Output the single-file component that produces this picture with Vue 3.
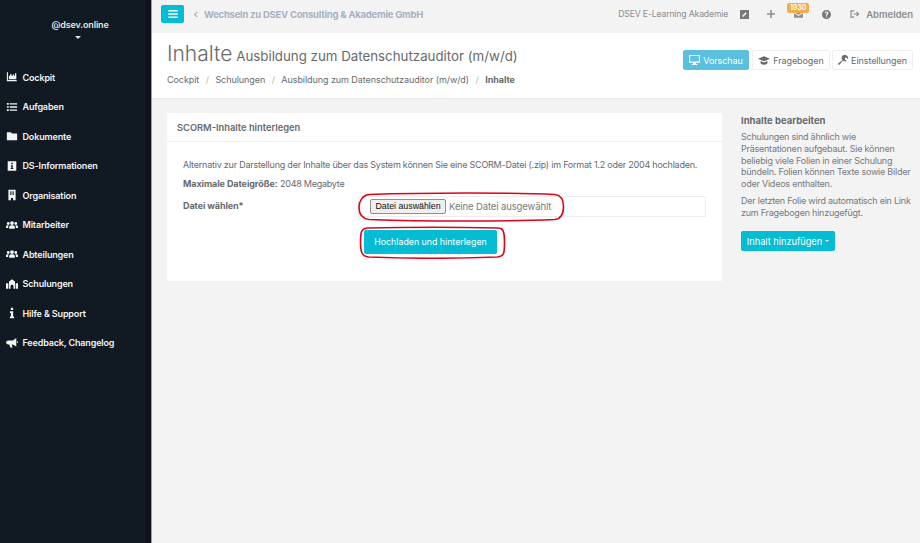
<script setup>
const users = 'M7 2.500a2.200 2.200 0 1 1 0 4.400 2.200 2.200 0 0 1 0-4.400zM2.600 3.500a1.700 1.700 0 1 1 0 3.400 1.700 1.700 0 0 1 0-3.400zM11.400 3.500a1.700 1.700 0 1 1 0 3.400 1.700 1.700 0 0 1 0-3.400zM3.700 11.500V9.300C3.700 8 5 7.400 7 7.400s3.300.6 3.300 1.900v2.200zM0 10.500V8.700c0-1 1-1.300 3.200-1.300-.5.500-.7 1.200-.7 3.100zM14 10.500V8.700c0-1-1-1.300-3.200-1.300.5.500.7 1.200.7 3.100z'
const nav = [
  { label: 'Cockpit', d: 'M1 1.500h1.300v9h10.200V12H1zM3.300 9.500V5.500H5v-2h1.500v2H8V4h1.500v1.500h1V2.500H12v7z' },
  { label: 'Aufgaben', d: 'M1 2.300h2.200v2H1zM1 6h2.200v2H1zM1 9.700h2.200v2H1zM4.300 2.500h8.700v1.600H4.300zM4.300 6.200h8.700v1.600H4.300zM4.300 9.900h8.700v1.600H4.300z' },
  { label: 'Dokumente', d: 'M1 2.500h4.500L7 4h6v8H1z' },
  { label: 'DS-Informationen', d: 'M2 1.500h10v11H2zM6.100 3.300v1.700h1.800V3.300zM5.600 6v1.200h.6v2.200h-.7v1.200h3V9.400h-.7V6z', rule: 'evenodd' },
  { label: 'Organisation', d: 'M2.800 .8h8.400v12.400H8.300v-2.700H5.700v2.700H2.800zM5 2.500v4.500h1.300V2.500zM7.700 2.500v4.500H9V2.500z', rule: 'evenodd' },
  { label: 'Mitarbeiter', d: users },
  { label: 'Abteilungen', d: users },
  { label: 'Schulungen', d: 'M7 1.500l3.500 2.500v8.500H8.700V9.500a1.700 1.700 0 0 0-3.400 0v3H3.500V4zM0 6h2.700v6.500H0zM11.300 6H14v6.500h-2.700z' },
  { label: 'Hilfe & Support', d: 'M5.700 1h2.600v2.500H5.700zM4.600 5h3.700v6h1.100v2H4.600v-2h1.100V7H4.600z' },
  { label: 'Feedback, Changelog', d: 'M12 1.200v10L8 8.700H6.700l1 3.600H4.900L3.900 8.700H2.500a2.200 2.200 0 0 1 0-4.700H8zM13 5h1v2h-1z' },
]
const crumbs = ['Cockpit', 'Schulungen', 'Ausbildung zum Datenschutzauditor (m/w/d)']
</script>

<template>
  <div class="app">
    <aside class="sidebar">
      <div class="profile">
        <span>@dsev.online</span>
        <i class="caret"></i>
      </div>
      <nav class="nav">
        <a v-for="item in nav" :key="item.label" class="nav-item">
          <svg viewBox="0 0 14 14" width="12" height="12" class="nav-icon">
            <path :d="item.d" :fill-rule="item.rule || 'nonzero'" fill="currentColor" />
          </svg>
          {{ item.label }}
        </a>
      </nav>
    </aside>

    <main class="main">
      <header class="topbar">
        <button class="menu-btn" aria-label="Menü">
          <svg viewBox="0 0 12 10" width="10" height="8"><path d="M0 0h12v2H0zM0 4h12v2H0zM0 8h12v2H0z" fill="#fff" /></svg>
        </button>
        <a class="switch">
          <svg viewBox="0 0 6 10" width="4" height="7"><path d="M5 1L1 5l4 4" fill="none" stroke="currentColor" stroke-width="1.800" /></svg>
          Wechseln zu DSEV Consulting &amp; Akademie GmbH
        </a>
        <div class="top-right">
          <span class="org">DSEV E-Learning Akademie</span>
          <svg class="ti" viewBox="0 0 12 12" width="9" height="9"><path d="M0 0h12v12H0zM7.500 3L3 7.500V9h1.500L9 4.500z" fill="currentColor" fill-rule="evenodd" /></svg>
          <svg class="ti plus" viewBox="0 0 10 10" width="8" height="8"><path d="M4 0h2v4h4v2H6v4H4V6H0V4h4z" fill="currentColor" /></svg>
          <span class="mail">
            <svg viewBox="0 0 12 10" width="9" height="8"><path d="M0 1h12v1.500L6 6 0 2.500zM0 4l6 3.500L12 4v6H0z" fill="currentColor" /></svg>
            <b class="badge">1930</b>
          </span>
          <svg class="ti help" viewBox="0 0 12 12" width="9" height="9"><path d="M6 0a6 6 0 1 1 0 12A6 6 0 0 1 6 0zM5.200 8.500v1.500h1.600V8.500zM6 2C4.500 2 3.600 2.800 3.500 4l1.500.2c.1-.6.400-.9 1-.9s.9.300.9.700c0 .9-1.700 1-1.700 2.900V7.500h1.600c0-1.400 1.800-1.400 1.800-3.400C8.600 2.800 7.500 2 6 2z" fill="currentColor" fill-rule="evenodd" /></svg>
          <a class="logout">
            <svg viewBox="0 0 12 10" width="10" height="8"><path d="M5 1H1v8h4M4 5h6M8 2.500L10.500 5 8 7.500" fill="none" stroke="currentColor" stroke-width="1.500" /></svg>
            Abmelden
          </a>
        </div>
      </header>

      <section class="page-head">
        <div class="titles">
          <h1>Inhalte <small>Ausbildung zum Datenschutzauditor (m/w/d)</small></h1>
          <ol class="crumbs">
            <li v-for="c in crumbs" :key="c">{{ c }}<span class="sep">/</span></li>
            <li><strong>Inhalte</strong></li>
          </ol>
        </div>
        <div class="actions">
          <button class="act primary">
            <svg viewBox="0 0 12 11" width="11" height="10"><path d="M0 0h12v8.500H7.500V10H9v1H3v-1h1.500V8.500H0zM1.200 1.200v6h9.600v-6z" fill="currentColor" fill-rule="evenodd" /></svg>
            Vorschau
          </button>
          <button class="act second">
            <svg viewBox="0 0 14 10" width="12" height="9"><path d="M7 0l7 3-7 3-7-3zM3 5.500l4 1.800 4-1.800V8c0 1-2 2-4 2S3 9 3 8z" fill="currentColor" /></svg>
            Fragebogen
          </button>
          <button class="act third">
            <svg viewBox="0 0 12 12" width="10" height="10"><path d="M8.500 0a3.500 3.500 0 0 1 3.300 4.800L9.800 2.900 8 3.500 8.500 5.300l1.900 1.600A3.500 3.500 0 0 1 6 6.500L2 11.500a1 1 0 0 1-1.500-1.500L5.500 6A3.500 3.500 0 0 1 8.500 0z" fill="currentColor" /></svg>
            Einstellungen
          </button>
        </div>
      </section>

      <div class="content">
        <section class="card">
          <h2 class="card-title">SCORM-Inhalte hinterlegen</h2>
          <div class="card-body">
            <p class="intro">Alternativ zur Darstellung der Inhalte über das System können Sie eine SCORM-Datei (.zip) im Format 1.2 oder 2004 hochladen.</p>
            <p class="max"><strong>Maximale Dateigröße:</strong> 2048 Megabyte</p>
            <div class="form-row">
              <label class="lbl">Datei wählen*</label>
              <div class="controls">
                <div class="file-box">
                  <span class="file-btn">Datei auswählen</span>
                  <span class="file-none">Keine Datei ausgewählt</span>
                  <svg class="mark mark-file" viewBox="0 0 208 30" preserveAspectRatio="none"><path d="M12 2.500C70 .5 150 .5 198 2.500c7 1 8.500 6 8.500 12s-1 12-8.500 13c-50 2-130 2-186 0-7-1-10-6-10-12s3-12 10-13z" fill="none" stroke="#e3001b" stroke-width="1.600" /></svg>
                </div>
                <div class="upload-wrap">
                  <button class="upload">Hochladen und hinterlegen</button>
                  <svg class="mark mark-upload" viewBox="0 0 146 33" preserveAspectRatio="none"><path d="M8 2c40-1 90-1 130 0 5 0 6.500 3 6.500 14s0 14-7 15c-40 1.500-90 1.500-128 0C3 30 1.500 27 1.500 16S2.500 3 8 2z" fill="none" stroke="#e3001b" stroke-width="1.600" /></svg>
                </div>
              </div>
            </div>
          </div>
        </section>

        <aside class="help-col">
          <h3>Inhalte bearbeiten</h3>
          <p>Schulungen sind ähnlich wie Präsentationen aufgebaut. Sie können beliebig viele Folien in einer Schulung bündeln. Folien können Texte sowie Bilder oder Videos enthalten.</p>
          <p>Der letzten Folie wird automatisch ein Link zum Fragebogen hinzugefügt.</p>
          <button class="add">Inhalt hinzufügen <i class="caret small"></i></button>
        </aside>
      </div>
    </main>
  </div>
</template>

<style>
html, body { margin: 0; background: #f3f3f4; }
</style>

<style scoped>
.app {
  display: flex;
  width: 920px;
  height: 543px;
  overflow: hidden;
  font-family: "Inter", "Open Sans", sans-serif;
  color: #676a6c;
  background: #f3f3f4;
}
.sidebar {
  flex: none;
  width: 146px;
  background: #111a22;
  color: #fff;
  border-right: 5px solid #0d1318;
}
.profile {
  display: flex;
  flex-direction: column;
  align-items: center;
  padding: 19px 0 0 14px;
  height: 47px;
  font-size: 9px;
  letter-spacing: -0.15px;
  font-weight: 600;
  color: #dfe4e8;
  line-height: 12px;
}
.profile .caret { margin: 5px 0 0 -5px; }
.caret {
  display: block;
  width: 0;
  height: 0;
  border: 3px solid transparent;
  border-top-color: currentColor;
  border-bottom-width: 0;
}
.nav { display: flex; flex-direction: column; margin-top: -3.500px; }
.nav-item {
  display: flex;
  align-items: center;
  gap: 5px;
  height: 29.500px;
  padding-left: 5.500px;
  font-size: 9px;
  letter-spacing: -0.15px;
  font-weight: 600;
  color: #f2f3f4;
}
.nav-icon { flex: none; color: #f2f3f4; }
.main {
  flex: 1;
  min-width: 0;
  display: flex;
  flex-direction: column;
  border-left: 1px solid #9c9ea0;
}
.topbar {
  display: flex;
  align-items: center;
  height: 33px;
  padding: 0 7px 0 9px;
  background: #f3f3f4;
}
.menu-btn {
  display: flex;
  align-items: center;
  justify-content: center;
  width: 23px;
  height: 18px;
  margin-top: -5px;
  padding: 0;
  border: 0;
  border-radius: 2px;
  background: #04bdd4;
}
.switch {
  display: flex;
  align-items: center;
  gap: 6px;
  margin: -5px 0 0 10px;
  font-size: 9.500px;
  letter-spacing: -0.24px;
  font-weight: 700;
  color: #a7b1c2;
}
.top-right {
  display: flex;
  align-items: center;
  margin-left: auto;
  margin-top: -5px;
  color: #8a8c8e;
}
.org { font-size: 8.600px; letter-spacing: -0.12px; margin-right: 12px; }
.ti { flex: none; color: #77797b; }
.plus { margin-left: 18px; color: #8d8f91; }
.mail { position: relative; display: flex; margin-left: 19px; color: #8d8f91; }
.badge {
  position: absolute;
  left: -7px;
  top: -7px;
  width: 22px;
  text-align: center;
  font-size: 7px;
  line-height: 10px;
  font-weight: 600;
  color: #fff;
  background: #f0ad4e;
  border-radius: 2px;
}
.help { margin-left: 19px; }
.logout {
  display: flex;
  align-items: center;
  gap: 6px;
  margin-left: 19px;
  font-size: 9.500px;
  font-weight: 600;
  color: #8a8c8e;
}
.page-head {
  display: flex;
  justify-content: space-between;
  height: 66px;
  padding: 0 7px 0 15px;
  background: #fff;
  box-sizing: border-box;
  border-bottom: 1px solid #e9e9ea;
}
h1 {
  margin: 8px 0 0;
  font-size: 21px;
  line-height: 26px;
  font-weight: 300;
  color: #676a6c;
  white-space: nowrap;
}
h1 small { font-size: 13.300px; font-weight: 400; margin-left: -2px; }
.crumbs {
  display: flex;
  list-style: none;
  margin: 4px 0 0;
  padding: 0;
  font-size: 9px;
  letter-spacing: -0.07px;
  line-height: 14px;
}
.sep { margin: 0 6.500px; color: #b5b7b9; }
.crumbs strong { font-weight: 700; }
.actions { display: flex; padding-top: 17px; align-items: flex-start; }
.act {
  display: flex;
  align-items: center;
  justify-content: center;
  gap: 3px;
  height: 20px;
  width: 78px;
  margin-left: 3px;
  padding: 0;
  font: 400 9px "Inter", sans-serif;
  letter-spacing: -0.08px;
  color: #676a6c;
  background: #fff;
  border: 1px solid #eeeeef;
  border-radius: 2px;
  box-sizing: border-box;
}
.act.primary { width: 66px; color: #fff; background: #5bc0de; border-color: #5bc0de; }
.act.third { width: 81px; margin-left: 2px; }
.content { flex: 1; display: flex; align-items: flex-start; padding: 14px 0 0 15px; }
.card { flex: none; width: 555px; height: 168px; background: #fff; box-sizing: border-box; }
.card-title {
  margin: 0;
  height: 29px;
  padding-left: 10px;
  font-size: 9.300px;
  line-height: 30px;
  font-weight: 600;
  color: #676a6c;
  border-bottom: 1px solid #efefef;
  box-sizing: border-box;
}
.card-body { padding: 16px 16px 0; font-size: 9px; line-height: 13px; }
.card-body p { margin: 0; }
.intro { letter-spacing: -0.22px; white-space: nowrap; }
.max { margin-top: 5.500px !important; letter-spacing: -0.25px; }
.max strong { font-weight: 700; letter-spacing: -0.08px; }
.form-row { display: flex; margin-top: 6px; }
.lbl { flex: none; width: 175px; padding-top: 3.500px; font-weight: 700; letter-spacing: -0.1px; }
.controls { flex: 1; }
.file-box {
  position: relative;
  display: flex;
  align-items: center;
  height: 21px;
  padding-left: 11px;
  border: 1px solid #eeeeef;
  box-sizing: border-box;
}
.file-btn {
  flex: none;
  padding: 0 4.500px;
  height: 15px;
  font: 8.800px/13px "Liberation Sans", sans-serif;
  color: #111;
  background: #efefef;
  border: 1px solid #8f8f8f;
  border-radius: 2px;
  box-sizing: border-box;
}
.file-none { margin-left: 3px; font-size: 9.500px; letter-spacing: -0.12px; color: #77797b; }
.mark { position: absolute; pointer-events: none; }
.mark-file { left: -2px; top: -5px; width: 208px; height: 30px; }
.upload-wrap { position: relative; margin-top: 13px; width: 133px; margin-left: 6px; }
.upload {
  display: block;
  width: 133px;
  height: 24px;
  padding: 0;
  border: 0;
  border-radius: 2px;
  font: 400 8.800px "Inter", sans-serif;
  color: #fff;
  background: #04bdd4;
}
.mark-upload { left: -5px; top: -4px; width: 147px; height: 33px; }
.help-col { width: 174px; margin-left: 19px; padding-top: 2px; font-size: 9px; line-height: 11.800px; letter-spacing: -0.23px; color: #77797b; }
.help-col h3 { margin: 0 0 4px; font-size: 9.500px; line-height: 12px; font-weight: 700; letter-spacing: 0; color: #676a6c; }
.help-col p { margin: 0 0 5.500px; }
.add {
  display: flex;
  align-items: center;
  justify-content: center;
  gap: 3px;
  width: 94px;
  height: 20px;
  margin-top: 12px;
  padding: 0;
  border: 0;
  border-radius: 2px;
  font: 400 9.200px "Inter", sans-serif;
  color: #fff;
  background: #04bdd4;
}
.caret.small { border-width: 2.500px; border-bottom-width: 0; }
</style>
